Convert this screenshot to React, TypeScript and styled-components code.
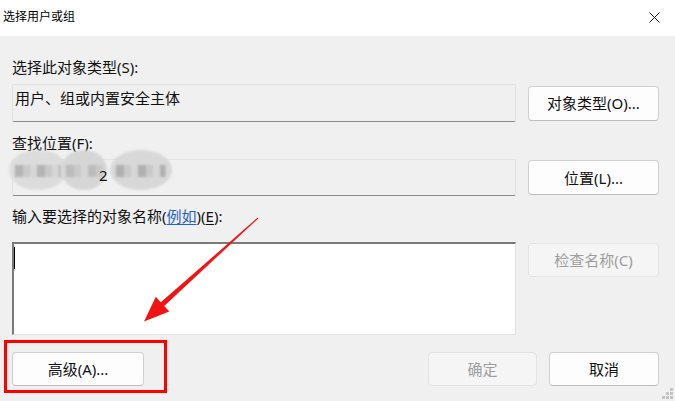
import React from 'react';
import styled, { createGlobalStyle } from 'styled-components';

const GlobalStyle = createGlobalStyle`
  html, body {
    margin: 0;
    padding: 0;
    background: #f0f0f0;
  }
  body {
    font-family: "Noto Sans", "Noto Sans CJK SC", sans-serif;
    color: #1a1a1a;
  }
`;

const Window = styled.div`
  position: relative;
  width: 675px;
  height: 401px;
  overflow: hidden;
  background: #f0f0f0;
  display: flex;
  flex-direction: column;
`;

const TitleBar = styled.div`
  height: 36px;
  flex: none;
  background: #ffffff;
  display: flex;
  align-items: center;
  justify-content: space-between;
  padding: 0 12px 2px 3px;
  box-sizing: border-box;
`;

const Title = styled.span`
  font-size: 12px;
  line-height: 16px;
  color: #000;
`;

const CloseIcon = styled.svg`
  width: 11px;
  height: 11px;
  margin-right: 3px;
`;

const Body = styled.div`
  display: flex;
  flex-direction: column;
  padding: 21px 16px 0 12px;
`;

const Label = styled.div<{ $top?: number }>`
  font-size: 15px;
  line-height: 20px;
  height: 20px;
  margin-top: ${(p) => p.$top ?? 0}px;
  white-space: nowrap;
  color: #111;
`;

const Link = styled.span`
  color: #1f63c4;
  text-decoration: underline;
  text-underline-offset: 2px;
`;

const Key = styled.span`
  text-decoration: underline;
  text-underline-offset: 2px;
`;

const Row = styled.div<{ $top: number; $align?: string }>`
  display: grid;
  grid-template-columns: 504px 131px;
  column-gap: 12px;
  align-items: ${(p) => p.$align ?? 'center'};
  margin-top: ${(p) => p.$top}px;
`;

const ReadOnlyBox = styled.div<{ $h: number }>`
  position: relative;
  height: ${(p) => p.$h}px;
  box-sizing: border-box;
  background: #f0f0f0;
  border: 1px solid #e2e2e2;
  border-bottom: 1px solid #8a8a8a;
  border-radius: 2px;
  padding: 3px 2px;
  font-size: 15px;
  line-height: 20px;
  white-space: nowrap;
  color: #111;
`;

const InputBox = styled.div`
  position: relative;
  height: 93px;
  box-sizing: border-box;
  background: #ffffff;
  border: 1px solid #e3e3e3;
  border-top: 2px solid #7a7a7a;
  border-left: 2px solid #7a7a7a;
  padding: 3px 0 0 0;
`;

const Caret = styled.span`
  display: block;
  width: 1px;
  height: 22px;
  background: #000;
`;

const Button = styled.button<{ $w?: number; $disabled?: boolean }>`
  width: ${(p) => (p.$w ? `${p.$w}px` : '100%')};
  height: 34px;
  box-sizing: border-box;
  background: ${(p) => (p.$disabled ? '#f5f5f5' : '#fdfdfd')};
  border: 1px solid ${(p) => (p.$disabled ? '#e3e3e3' : '#d0d0d0')};
  border-bottom-color: ${(p) => (p.$disabled ? '#e3e3e3' : '#bdbdbd')};
  border-radius: 4px;
  color: ${(p) => (p.$disabled ? '#9d9d9d' : '#111')};
  font-family: "Noto Sans", "Noto Sans CJK SC", sans-serif;
  font-size: 15px;
  line-height: 20px;
  padding: 0;
  cursor: default;
`;

const TallButton = styled(Button)`
  height: 35px;
`;

const CheckButton = styled(Button)`
  align-self: start;
  margin-top: 1px;
`;

const Footer = styled.div`
  display: flex;
  align-items: center;
  gap: 12px;
  margin-top: 17px;
`;

const Spacer = styled.div`
  flex: 1;
`;

const Masked = styled.div`
  position: absolute;
  left: -4px;
  top: -11px;
  display: flex;
  align-items: center;
  height: 42px;
`;

const Blob = styled.span<{ $w: number; $tone: string; $band: string }>`
  display: inline-block;
  width: ${(p) => p.$w}px;
  height: 40px;
  border-radius: 50%;
  background:
    repeating-linear-gradient(
      90deg,
      ${(p) => p.$band} 0 8px,
      #c9c9c9 8px 15px,
      #d6d6d6 15px 22px
    ) center 55% / 80% 12px no-repeat,
    ${(p) => p.$tone};
  filter: blur(1.2px);
  margin-right: -6px;
`;

const MaskChar = styled.span`
  font-size: 15px;
  line-height: 20px;
  margin: 10px 2px 0 -2px;
  position: relative;
  z-index: 1;
`;

const Annotation = styled.svg`
  position: absolute;
  left: 0;
  top: 0;
  width: 675px;
  height: 401px;
  pointer-events: none;
`;

const Grip = styled.svg`
  position: absolute;
  right: 1px;
  bottom: 1px;
  width: 12px;
  height: 12px;
`;

export default function App() {
  return (
    <>
      <GlobalStyle />
      <Window>
        <TitleBar>
          <Title>选择用户或组</Title>
          <CloseIcon viewBox="0 0 11 11">
            <path d="M0.5 0.5 L10.5 10.5 M10.5 0.5 L0.5 10.5" stroke="#1a1a1a" strokeWidth="1" />
          </CloseIcon>
        </TitleBar>
        <Body>
          <Label>选择此对象类型(S):</Label>
          <Row $top={7}>
            <ReadOnlyBox $h={38}>用户、组或内置安全主体</ReadOnlyBox>
            <TallButton>对象类型(O)...</TallButton>
          </Row>
          <Label $top={11}>查找位置(F):</Label>
          <Row $top={6}>
            <ReadOnlyBox $h={37}>
              <Masked>
                <Blob $w={58} $tone="#dcdcdc" $band="#b4b4b4" />
                <Blob $w={46} $tone="#d6d6d6" $band="#bcbcbc" />
                <MaskChar>2</MaskChar>
                <Blob $w={62} $tone="#d8d8d8" $band="#b0b0b0" />
              </Masked>
            </ReadOnlyBox>
            <TallButton>位置(L)...</TallButton>
          </Row>
          <Label $top={10}>
            输入要选择的对象名称(<Link>例如</Link>)(<Key>E</Key>):
          </Label>
          <Row $top={16} $align="start">
            <InputBox>
              <Caret />
            </InputBox>
            <CheckButton $disabled>检查名称(C)</CheckButton>
          </Row>
          <Footer>
            <Button $w={132}>高级(A)...</Button>
            <Spacer />
            <Button $w={109} $disabled>确定</Button>
            <Button $w={110}>取消</Button>
          </Footer>
        </Body>
        <Annotation viewBox="0 0 675 401">
          <rect x="5.5" y="341.5" width="160" height="50" fill="none" stroke="#ff0000" strokeWidth="3" />
          <polygon
            points="258.3,218.4 164.2,306 169.3,311.5 144,321.5 155.8,296.7 160.8,302.3 257.7,217.6"
            fill="#f01414"
          />
        </Annotation>
        <Grip viewBox="0 0 12 12">
          <rect x="8" y="0" width="3" height="3" fill="#c4c4c4" />
          <rect x="4" y="4" width="3" height="3" fill="#c4c4c4" />
          <rect x="8" y="4" width="3" height="3" fill="#c4c4c4" />
          <rect x="0" y="8" width="3" height="3" fill="#c4c4c4" />
          <rect x="4" y="8" width="3" height="3" fill="#c4c4c4" />
          <rect x="8" y="8" width="3" height="3" fill="#c4c4c4" />
        </Grip>
      </Window>
    </>
  );
}
